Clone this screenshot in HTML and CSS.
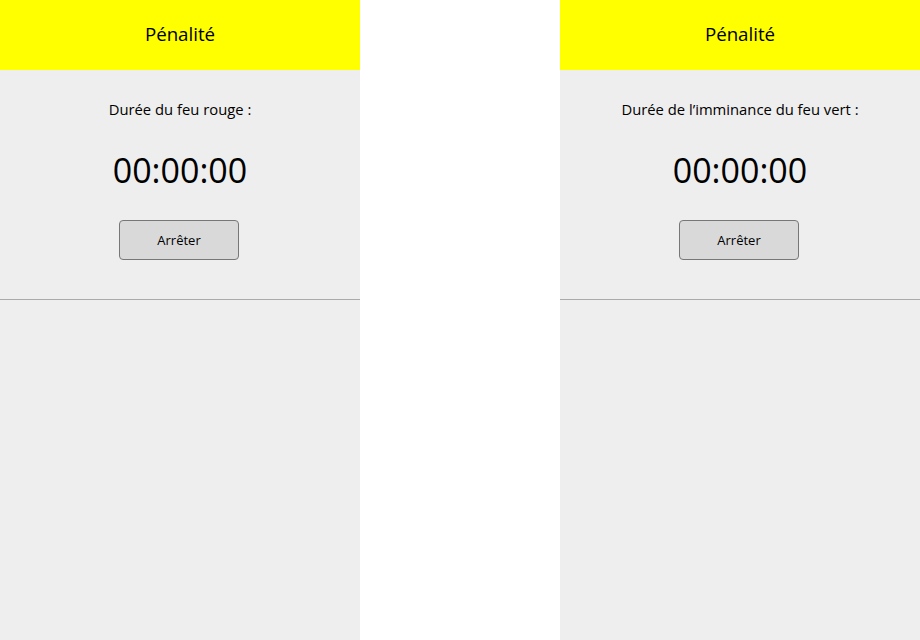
FILE: index.html
```html
<!DOCTYPE html>
<html lang="fr">
<head>
<meta charset="utf-8">
<title>Pénalité</title>
<link rel="stylesheet" href="styles.css">
</head>
<body>
<div class="layout">
  <section class="panel">
    <header class="panel-header">Pénalité</header>
    <div class="panel-body">
      <div class="label">Durée du feu rouge :</div>
      <div class="timer">00:00:00</div>
      <button class="btn">Arrêter</button>
    </div>
  </section>
  <div class="spacer"></div>
  <section class="panel">
    <header class="panel-header">Pénalité</header>
    <div class="panel-body">
      <div class="label">Durée de l’imminance du feu vert :</div>
      <div class="timer">00:00:00</div>
      <button class="btn">Arrêter</button>
    </div>
  </section>
</div>
</body>
</html>
```
FILE: styles.css
```css
html, body {
  margin: 0;
  padding: 0;
  background: #ffffff;
  font-family: "Open Sans", "Noto Sans", sans-serif;
  color: #000;
}
.layout {
  display: flex;
  width: 920px;
  height: 640px;
}
.panel {
  width: 360px;
  height: 640px;
  background: #eeeeee;
  display: flex;
  flex-direction: column;
}
.spacer {
  width: 200px;
  background: #ffffff;
}
.panel-header {
  height: 66px;
  padding-bottom: 4px;
  background: #ffff00;
  display: flex;
  align-items: center;
  justify-content: center;
  font-size: 18.7px;
}
.panel-body {
  display: flex;
  flex-direction: column;
  align-items: center;
  padding: 29px 0 39px;
  border-bottom: 1px solid #aaaaaa;
}
.label {
  font-size: 14.8px;
  line-height: 20px;
}
.timer {
  margin-top: 26px;
  font-size: 34px;
  line-height: 50px;
}
.btn {
  margin-top: 25px;
  margin-right: 2px;
  width: 120px;
  height: 40px;
  background: #d9d9d9;
  border: 1px solid #777777;
  border-radius: 4px;
  font-family: inherit;
  font-size: 13px;
  line-height: 36px;
  color: #000;
  padding: 0 0 1px;
}
```
